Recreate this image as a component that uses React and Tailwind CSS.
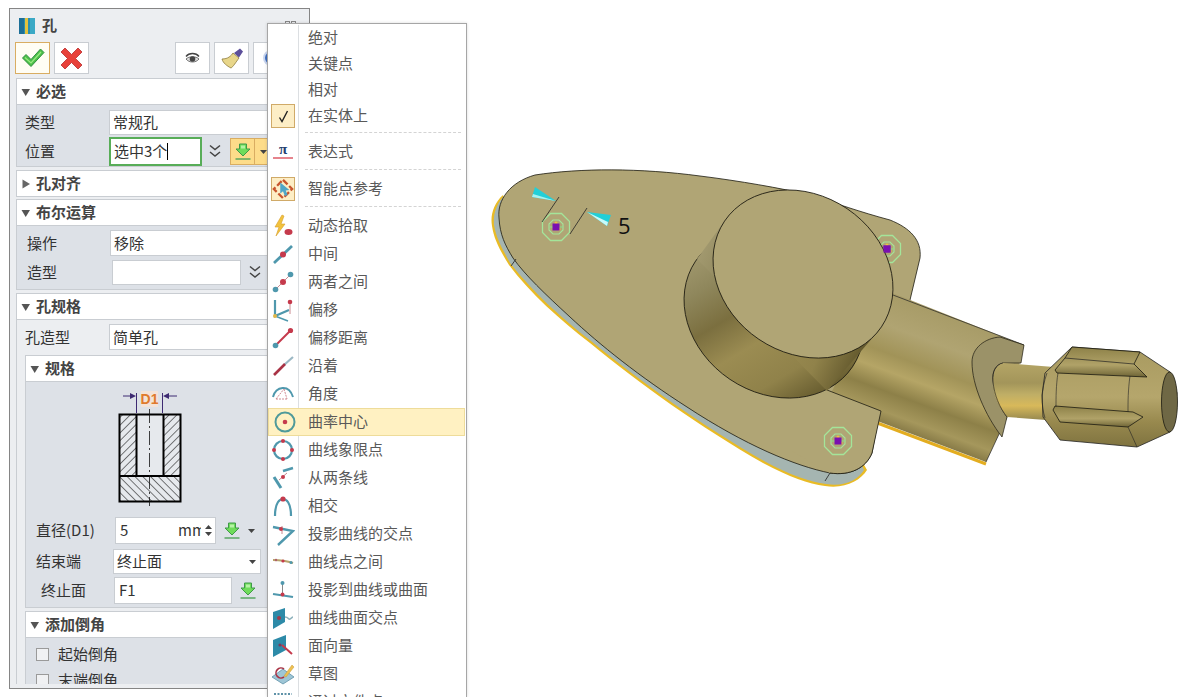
import React from "react";

const TEAL = "#4f98ad";
const RED = "#c53a4c";

const Tri = ({ open = true }) => (
  <svg width="10" height="10" viewBox="0 0 10 10" className="shrink-0">
    {open ? <path d="M0.5 2h8.5L4.7 9z" fill="#555" /> : <path d="M1.5 0.5v9L9 5z" fill="#666" />}
  </svg>
);

const Caret = () => (
  <svg width="7" height="4" viewBox="0 0 7 4" className="shrink-0">
    <path d="M0 0h7L3.5 4z" fill="#444" />
  </svg>
);

const Chevrons = () => (
  <svg width="14" height="16" viewBox="0 0 14 16" className="shrink-0">
    <path d="M2 1.5 7 5.5 12 1.5M2 8 7 12 12 8" fill="none" stroke="#444" strokeWidth="1.5" />
  </svg>
);

const GreenDown = () => (
  <svg width="18" height="18" viewBox="0 0 18 18" className="shrink-0">
    <path d="M5.5 1h7v5h3.5L9 13 2 6h3.5z" fill="#6fdc5a" stroke="#3f9a48" strokeWidth="1" />
    <path d="M7 2.5h4v3H7z" fill="#b7f2a5" />
    <path d="M1.5 16h15" stroke="#4fa35a" strokeWidth="1.4" />
  </svg>
);

const Header = ({ title, open = true }) => (
  <div className="h-[27px] bg-white border border-[#c9cdd2] flex items-center gap-[5px] pl-[4px] font-bold text-[15px] text-[#444]">
    <Tri open={open} />
    <span className="pb-px">{title}</span>
  </div>
);

const Select = ({ value, className }) => (
  <div className={`bg-white border border-[#c9cdd2] flex items-center justify-between pl-[3px] pr-[4px] text-[15px] text-[#333] ${className}`}>
    <span>{value}</span>
    <Caret />
  </div>
);

const ToolBtn = ({ active, children }) => (
  <div className={`w-[35px] h-[32px] border flex items-center justify-center shrink-0 ${active ? "border-[#d9ad62] bg-[#fffdf4]" : "bg-white border-[#c9cdd2]"}`}>
    {children}
  </div>
);

const Diagram = () => (
  <svg className="block w-[241px] h-[131px]" viewBox="26 382 241 131">
    <defs>
      <pattern id="h1" width="5.500" height="5.500" patternUnits="userSpaceOnUse" patternTransform="rotate(45)">
        <path d="M0 0V5.500" stroke="#000" strokeWidth="1" />
      </pattern>
      <pattern id="h2" width="5.500" height="5.500" patternUnits="userSpaceOnUse" patternTransform="rotate(-45)">
        <path d="M0 0V5.500" stroke="#000" strokeWidth="1" />
      </pattern>
    </defs>
    <rect x="119.5" y="414.5" width="61" height="87" fill="#e6e9ed" />
    <rect x="119.5" y="414.5" width="17" height="62" fill="url(#h1)" />
    <rect x="163.5" y="414.5" width="17" height="62" fill="url(#h1)" />
    <rect x="119.5" y="476" width="61" height="26" fill="url(#h2)" />
    <path d="M119.5 414.5h61v87h-61zM136.5 414.5v62M163.5 414.5v62M119.5 476h61" fill="none" stroke="#000" strokeWidth="2" />
    <path d="M149.5 409v97" stroke="#111" strokeWidth="0.8" strokeDasharray="14 3 2 3" />
    <path d="M136.5 393v20M162.5 393v20" stroke="#3d2a72" strokeWidth="1" />
    <path d="M123 396h8M168 396h9" stroke="#3d2a72" strokeWidth="1" />
    <path d="M130 393l6 3-6 3zM169 393l-6 3 6 3z" fill="#3d2a72" />
    <rect x="141" y="391" width="17" height="16" fill="#f3e3d8" />
    <text x="149.5" y="404" textAnchor="middle" fontSize="14" fontWeight="700" fill="#e07a2c" fontFamily="'Liberation Sans', sans-serif">D1</text>
  </svg>
);

const Panel = () => (
  <div className="mt-[8px] ml-[9px] w-[301px] h-[681px] shrink-0 border border-[#858585] bg-[#eceef1]">
    <div className="h-[675px] flex flex-col overflow-hidden">
      <div className="h-[33px] shrink-0 flex items-center gap-[7px] pl-[9px] text-[15px] font-bold text-[#444]">
        <svg width="16" height="16" viewBox="0 0 16 16">
          <rect width="16" height="16" rx="2" fill="#2b8fb0" />
          <rect x="0" width="5" height="16" fill="#1c6f98" />
          <rect x="6" width="3" height="16" fill="#e3c13d" />
          <rect x="11" width="5" height="16" fill="#3ba9c6" />
        </svg>
        <span>孔</span>
        <span className="ml-auto mr-[13px] flex gap-[1px]">
          <span className="w-[5px] h-[10px] border border-[#888]" />
          <span className="w-[5px] h-[10px] border border-[#888]" />
        </span>
      </div>
      <div className="h-[32px] shrink-0 flex gap-[4px] pl-[5px]">
        <ToolBtn active>
          <svg width="24" height="20" viewBox="0 0 24 20">
            <path d="M1.500 10 5 6.500l5 5L19.500 1 23 4.500 10 18.500z" fill="#4cc04a" stroke="#2f8f3d" strokeWidth="1" />
            <path d="M4 9.500l6 5.500L20 4" fill="none" stroke="#9bea83" strokeWidth="1.200" />
          </svg>
        </ToolBtn>
        <ToolBtn>
          <svg width="23" height="23" viewBox="0 0 23 23">
            <path d="M1 5 5 1l6.500 6.500L18 1l4 4-6.500 6.500L22 18l-4 4-6.500-6.500L5 22l-4-4 6.500-6.500z" fill="#e8413a" stroke="#b72c2c" strokeWidth="0.800" />
          </svg>
        </ToolBtn>
        <div className="w-[78px]" />
        <ToolBtn>
          <svg width="15" height="12" viewBox="0 0 15 12">
            <path d="M1 4.500C4 0.500 11 0.500 14 4.500" fill="none" stroke="#444" strokeWidth="1.300" />
            <path d="M1 7c3-3 10-3 13 0-3 4-10 4-13 0z" fill="#ddd" stroke="#555" strokeWidth="0.800" />
            <circle cx="7.500" cy="7" r="2.800" fill="#444" />
          </svg>
        </ToolBtn>
        <ToolBtn>
          <svg width="24" height="22" viewBox="0 0 24 22">
            <path d="M2 12 C8 12 11 9 13 6 L19 11 C16 15 13 20 11 21 C7 19 3 16 2 12Z" fill="#e8d68a" stroke="#8d7a3a" strokeWidth="0.800" />
            <path d="M14 6 20 1.500 23 4.500 19 10.500z" fill="#5c4f9a" />
          </svg>
        </ToolBtn>
        <ToolBtn>
          <div className="w-[16px] h-[16px] rounded-full bg-[#3f6fc0] border-2 border-[#c9d6ef]" />
        </ToolBtn>
      </div>

      <div className="flex flex-col shrink-0 w-[288px] ml-[6px] mt-[4px]">
        <Header title="必选" />
        <div className="h-[62px] bg-[#dde1e7] border border-t-0 border-[#c9cdd2] text-[15px] text-[#333] flex flex-col pt-[5px] pl-[8px] gap-[2px]">
          <div className="flex items-center h-[25px]">
            <span className="w-[84px]">类型</span>
            <Select value="常规孔" className="h-[25px] w-[170px]" />
          </div>
          <div className="flex items-center h-[29px]">
            <span className="w-[84px]">位置</span>
            <div className="w-[93px] h-[29px] bg-white border-2 border-[#58ad58] flex items-center pl-[3px]">
              <span>选中3个</span>
              <span className="w-px h-[17px] bg-black" />
            </div>
            <div className="ml-[6px]"><Chevrons /></div>
            <div className="ml-[8px] w-[40px] h-[27px] bg-[#fddc8a] border border-[#d9ad62] flex items-center">
              <div className="w-[24px] flex justify-center border-r border-[#d9ad62] h-full items-center"><GreenDown /></div>
              <div className="ml-[5px]"><Caret /></div>
            </div>
          </div>
        </div>

        <div className="mt-[3px]"><Header title="孔对齐" open={false} /></div>

        <div className="mt-[2px]"><Header title="布尔运算" /></div>
        <div className="h-[64px] bg-[#dde1e7] border border-t-0 border-[#c9cdd2] text-[15px] text-[#333] flex flex-col pt-[4px] pl-[10px] gap-[4px]">
          <div className="flex items-center h-[26px]">
            <span className="w-[83px]">操作</span>
            <Select value="移除" className="h-[26px] w-[170px]" />
          </div>
          <div className="flex items-center h-[25px]">
            <span className="w-[85px]">造型</span>
            <div className="w-[129px] h-[25px] bg-white border border-[#c9cdd2]" />
            <div className="ml-[7px]"><Chevrons /></div>
          </div>
        </div>

        <div className="mt-[3px]"><Header title="孔规格" /></div>
        <div className="h-[365px] bg-[#eceef1] border-l border-[#c9cdd2] text-[15px] text-[#333] flex flex-col">
          <div className="flex items-center h-[26px] mt-[4px] pl-[8px]">
            <span className="w-[84px]">孔造型</span>
            <Select value="简单孔" className="h-[26px] w-[170px]" />
          </div>
          <div className="ml-[8px] mt-[5px] w-[270px] flex flex-col">
            <Header title="规格" />
            <div className="h-[226px] bg-[#dde1e7] border-l border-b border-[#c9cdd2] flex flex-col">
              <Diagram />
              <div className="flex items-center h-[27px] mt-[4px] pl-[10px]">
                <span className="w-[79px] whitespace-nowrap">直径(D1)</span>
                <div className="w-[101px] h-[27px] bg-white border border-[#c9cdd2] flex items-center pl-[4px] pr-[3px] justify-between">
                  <span>5</span>
                  <span className="flex items-center gap-[4px]">
                    <span className="w-[23px] overflow-hidden whitespace-nowrap">mm</span>
                    <span className="flex flex-col gap-[3px]">
                      <svg width="7" height="4" viewBox="0 0 7 4"><path d="M0 4h7L3.500 0z" fill="#444" /></svg>
                      <Caret />
                    </span>
                  </span>
                </div>
                <div className="ml-[7px]"><GreenDown /></div>
                <div className="ml-[7px]"><Caret /></div>
              </div>
              <div className="flex items-center h-[25px] mt-[5px] pl-[10px]">
                <span className="w-[77px]">结束端</span>
                <Select value="终止面" className="h-[25px] w-[148px]" />
              </div>
              <div className="flex items-center h-[27px] mt-[3px] pl-[15px]">
                <span className="w-[73px]">终止面</span>
                <div className="w-[118px] h-[27px] bg-white border border-[#c9cdd2] flex items-center pl-[4px]">F1</div>
                <div className="ml-[7px]"><GreenDown /></div>
              </div>
            </div>
            <div className="mt-[3px]"><Header title="添加倒角" /></div>
            <div className="h-[60px] bg-[#dde1e7] border-l border-[#c9cdd2] flex flex-col pl-[10px] pt-[9px] gap-[12px]">
              <div className="flex items-center gap-[9px] h-[14px]">
                <span className="w-[13px] h-[13px] bg-[#f0f1f3] border border-[#9a9a9a]" />
                <span>起始倒角</span>
              </div>
              <div className="flex items-center gap-[9px] h-[14px]">
                <span className="w-[13px] h-[13px] bg-[#f0f1f3] border border-[#9a9a9a]" />
                <span>末端倒角</span>
              </div>
            </div>
          </div>
        </div>
      </div>
    </div>
  </div>
);

// menu icons, 24x24
const I = ({ children }) => (
  <svg width="24" height="24" viewBox="0 0 24 24">{children}</svg>
);
const Dot = ({ x, y, c = RED, r = 2.4 }) => <circle cx={x} cy={y} r={r} fill={c} />;
const Ln = ({ d, c = TEAL, w = 2.2 }) => <path d={d} fill="none" stroke={c} strokeWidth={w} />;

const icons = {
  expr: (
    <I>
      <text x="12" y="14" textAnchor="middle" fontSize="15" fontWeight="700" fill="#24406f" fontFamily="'Liberation Serif', serif">π</text>
      <path d="M2 18h20" stroke="#d9424f" strokeWidth="1.300" />
    </I>
  ),
  smart: (
    <I>
      <path d="M12 2 22 12 12 22 2 12z" fill="none" stroke="#c8562e" strokeWidth="2.500" strokeDasharray="7 2.500" />
      <path d="M9 5l10 8-4 .5 2 5-3 1-2-5-3 2.500z" fill="#4fa6c8" />
    </I>
  ),
  dyn: (
    <I>
      <path d="M11 1 4 13h4l-3 9 9-12h-4l3-8z" fill="#f2c23e" stroke="#d79d2a" strokeWidth="0.600" />
      <ellipse cx="17.500" cy="18" rx="4" ry="3" fill={RED} />
    </I>
  ),
  mid: (<I><Ln d="M3 21 21 4" w={2.800} /><Dot x={12} y={12.500} r={3} /></I>),
  between: (<I><Ln d="M5 19 19 5" c="#c98a90" w={1} /><Dot x={12} y={12} r={3} /><Dot x={4.500} y={19.500} c={TEAL} r={2.800} /><Dot x={19.500} y={4.500} c={TEAL} r={2.800} /></I>),
  offset: (<I><Ln d="M4 2v16l14-6" /><Ln d="M4 18l13 5" w={1.500} /><Ln d="M19 6v10" c="#c98a90" w={1} /><Dot x={19} y={4} r={2.300} /><Dot x={4} y={18} c="#e2b648" r={2} /></I>),
  dist: (<I><Ln d="M5 19 19 5" c={RED} w={2} /><Dot x={19.500} y={4.500} r={2.600} /><Dot x={4.500} y={19.500} c={TEAL} r={2.800} /></I>),
  along: (<I><Ln d="M13 11 22 3" c="#9bb8c4" w={2.200} /><Ln d="M3 21 14 10" c="#a93345" w={2.600} /></I>),
  angle: (<I><path d="M2 15C5 4 18 2 22 15" fill="none" stroke={TEAL} strokeWidth="2" /><path d="M5 17 13 7M5 17h11M13 7l3 10" fill="none" stroke="#d08a92" strokeWidth="1" strokeDasharray="2 1" /></I>),
  center: (<I><circle cx="12" cy="12" r="9.500" fill="none" stroke="#4f9a9a" strokeWidth="2" /><Dot x={12} y={12} r={2.300} /></I>),
  quad: (<I><circle cx="12" cy="12" r="9" fill="none" stroke={TEAL} strokeWidth="2.200" /><Dot x={12} y={3} r={2} /><Dot x={12} y={21} r={2} /><Dot x={3} y={12} r={2} /><Dot x={21} y={12} r={2} /></I>),
  two: (<I><Ln d="M3 11l7 11" w={3} /><Ln d="M12 5l10-3" w={2.500} /><Ln d="M8 14l8-7" c="#c98a90" w={1} /><Dot x={12} y={11} r={2} /></I>),
  cross: (<I><Ln d="M4 22C4 8 9 5 12 5s8 3 8 17" w={2.200} /><Dot x={12} y={5} r={2.600} /></I>),
  proj: (<I><Ln d="M2 5l20 4L7 23" w={2.400} /><Ln d="M11 4v8" c="#c98a90" w={1} /><Dot x={10} y={7} r={2} /></I>),
  curve: (<I><path d="M2 10c6 0 14 1 20 3" fill="none" stroke="#b7a36a" strokeWidth="2.200" /><Dot x={5} y={10} c="#b0606a" r={1.200} /><Dot x={12} y={11} r={1.600} /><Dot x={20} y={12.500} c={TEAL} r={1.500} /></I>),
  toCurve: (<I><Ln d="M2 16l20 3" w={2.200} /><Ln d="M11.500 6v10" c="#888" w={1} /><Dot x={11.500} y={5} c={TEAL} r={2} /><Dot x={11.500} y={16.500} r={2} /></I>),
  face: (<I><path d="M2 6 14 2v14L2 23z" fill="#2d8aa8" /><path d="M14 11c4 0 3 3 5 2s2-2 3-2" fill="none" stroke="#8fb3bd" strokeWidth="1.500" /><Dot x={8} y={12} c="#a33a4a" r={2} /></I>),
  normal: (<I><path d="M2 6 15 1v15L2 23z" fill="#2d8aa8" /><Ln d="M11 11 21 20" c={RED} w={2} /><Dot x={9} y={11} c="#7b3a5a" r={1.600} /></I>),
  sketch: (<I><path d="M1 15 12 7l11 8-11 7z" fill="#9ec6d6" stroke="#5f92a8" strokeWidth="0.800" /><path d="M13 7a5 5 0 1 0 0 8" fill="none" stroke="#a93345" strokeWidth="1.600" /><path d="M13 14 21 3l2 2-8 10z" fill="#eec052" stroke="#c69a34" strokeWidth="0.500" /></I>),
  dots: (<I><path d="M3 4h18" stroke="#5f92a8" strokeWidth="2" strokeDasharray="2 1.500" /></I>),
};

const rows = [
  { t: "绝对", h: 26 },
  { t: "关键点", h: 26 },
  { t: "相对", h: 26 },
  { t: "在实体上", h: 26, box: true, check: true },
  { sep: true },
  { t: "表达式", icon: "expr" },
  { sep: true },
  { t: "智能点参考", icon: "smart", box: true },
  { sep: true },
  { t: "动态拾取", icon: "dyn" },
  { t: "中间", icon: "mid" },
  { t: "两者之间", icon: "between" },
  { t: "偏移", icon: "offset" },
  { t: "偏移距离", icon: "dist" },
  { t: "沿着", icon: "along" },
  { t: "角度", icon: "angle" },
  { t: "曲率中心", icon: "center", hover: true },
  { t: "曲线象限点", icon: "quad" },
  { t: "从两条线", icon: "two" },
  { t: "相交", icon: "cross" },
  { t: "投影曲线的交点", icon: "proj" },
  { t: "曲线点之间", icon: "curve" },
  { t: "投影到曲线或曲面", icon: "toCurve" },
  { t: "曲线曲面交点", icon: "face" },
  { t: "面向量", icon: "normal" },
  { t: "草图", icon: "sketch" },
  { t: "通过文件点", icon: "dots" },
];

const Menu = () => (
  <div className="absolute left-[267px] top-[23px] w-[200px] h-[674px] overflow-hidden bg-white border border-b-0 border-[#a6a6a6] shadow-[0_0_3px_rgba(0,0,0,0.15)] pt-px text-[15px] text-[#595959]">
    {rows.map((r, i) =>
      r.sep ? (
        <div key={i} className="flex h-[9px]">
          <div className="w-[31px] border-r border-[#dcdfe2]" />
          <div className="flex-1 pl-[6px] pr-[5px] pt-[3px]">
            <div className="border-t border-dashed border-[#d4d4d4]" />
          </div>
        </div>
      ) : (
        <div
          key={i}
          className={`flex items-center mr-px ${r.h === 26 ? "h-[26px]" : "h-[28px]"} ${r.hover ? "bg-[#fff1c2] border border-[#eedc9a]" : ""}`}
        >
          <div className={`w-[31px] h-full shrink-0 flex items-center justify-center ${r.hover ? "" : "border-r border-[#dcdfe2]"}`}>
            {r.box ? (
              <div className="w-[24px] h-[24px] bg-[#fdeec6] border border-[#d0aa68] flex items-center justify-center">
                {r.check ? (
                  <svg width="11" height="13" viewBox="0 0 11 13"><path d="M1.500 7.500 4 11.500 9.500 1" fill="none" stroke="#222" strokeWidth="1.400" /></svg>
                ) : (
                  icons[r.icon]
                )}
              </div>
            ) : (
              r.icon && icons[r.icon]
            )}
          </div>
          <span className={`${r.hover ? "pl-[8px]" : "pl-[9px]"} pb-px whitespace-nowrap`}>{r.t}</span>
        </div>
      )
    )}
  </div>
);

const Hole = ({ x, y }) => (
  <g transform={`translate(${x} ${y})`}>
    <path d="M-5.500-13.500h11l8 8v11l-8 8h-11l-8-8v-11z" fill="none" stroke="#a4e59a" strokeWidth="1.300" />
    <path d="M-3-7h6l4 4v6l-4 4h-6l-4-4v-6z" fill="none" stroke="#a4e59a" strokeWidth="1.100" />
    <path d="M-7 0H7" stroke="#8fdc8a" strokeWidth="1" />
    <circle cx="3" cy="2" r="1.500" fill="#f0c040" />
    <circle cx="0" cy="-4" r="1.500" fill="#f0c040" />
    <rect x="-3.500" y="-3.500" width="7" height="7" fill="#7a10b0" />
  </g>
);

const Model = () => (
  <svg className="block flex-1 h-[697px]" viewBox="310 0 874 697">
    <defs>
      <linearGradient id="cyl" gradientUnits="userSpaceOnUse" x1="680" y1="280" x2="870" y2="370">
        <stop offset="0" stopColor="#a59c72" />
        <stop offset="0.2" stopColor="#8f875c" />
        <stop offset="0.38" stopColor="#7b6f3f" />
        <stop offset="0.55" stopColor="#9b8c52" />
        <stop offset="0.75" stopColor="#90824a" />
        <stop offset="0.9" stopColor="#6b6032" />
        <stop offset="1" stopColor="#4f4826" />
      </linearGradient>
      <linearGradient id="shaft" gradientUnits="userSpaceOnUse" x1="950" y1="318" x2="905" y2="440">
        <stop offset="0" stopColor="#a89c68" />
        <stop offset="0.22" stopColor="#b0a472" />
        <stop offset="0.42" stopColor="#a19358" />
        <stop offset="0.55" stopColor="#b5a566" />
        <stop offset="0.7" stopColor="#8d8048" />
        <stop offset="0.85" stopColor="#a5975c" />
        <stop offset="1" stopColor="#75693a" />
      </linearGradient>
      <linearGradient id="rod" x1="0" y1="0" x2="0" y2="1">
        <stop offset="0" stopColor="#b4a566" />
        <stop offset="0.35" stopColor="#a3955a" />
        <stop offset="0.55" stopColor="#bfae66" />
        <stop offset="0.75" stopColor="#d8b95a" />
        <stop offset="1" stopColor="#968950" />
      </linearGradient>
      <linearGradient id="knob" x1="0" y1="0" x2="0" y2="1">
        <stop offset="0" stopColor="#a89a60" />
        <stop offset="0.5" stopColor="#b5a66c" />
        <stop offset="0.75" stopColor="#98894e" />
        <stop offset="1" stopColor="#7f7340" />
      </linearGradient>
      <linearGradient id="ridge" x1="0" y1="0" x2="0" y2="1">
        <stop offset="0" stopColor="#8d8148" />
        <stop offset="0.6" stopColor="#b0a268" />
        <stop offset="1" stopColor="#6e6436" />
      </linearGradient>
    </defs>

    <path d="M503 195C494 203 490 215 492 226C494 240 501 252 509 265C530 293 560 320 590 343C640 384 700 427 763 463C790 477 808 484 825 486C845 489 860 481 867 470L850 440L510 215Z" fill="#e9bb25" />
    <path d="M503 197C496 205 493 215 494 225C496 238 503 250 510 263C532 291 561 318 591 341C641 382 701 425 764 461C790 475 810 482 826 484C845 487 858 480 864 470L850 440L510 215Z" fill="#a5b5b1" />

    <path d="M499 218C497 200 510 182 535 175C580 168 640 168 700 176C740 181 780 188 810 195C835 203 860 212 890 220C910 228 922 240 920 258L910 300L880 410L872 453C866 468 850 476 830 473C795 466 745 445 687 407C640 377 600 345 570 317C545 294 525 275 513 258C505 245 500 235 499 218Z" fill="#b0a575" stroke="#1c1a10" strokeWidth="0.800" />
    <path d="M516 259 511 266M830 473 825 481" stroke="#222" strokeWidth="0.800" />

    <Hole x={887} y={249} />

    <path d="M827 404 986 464" stroke="#e3ad20" strokeWidth="3" />
    <path d="M880 288 1024 345 1007 417 986 462 827 402z" fill="url(#shaft)" />
    <path d="M893 295 1024 345M1007 417 986 462" stroke="#222" strokeWidth="0.700" />
    <path d="M1000 337 1024 345 1021 363 1003 363C995 365 992 372 993 381C994 395 1000 408 1007 417L1002 437C985 415 972 385 972 362C972 348 985 338 1000 337Z" fill="#9b9268" stroke="#1c1a10" strokeWidth="0.700" />

    <path d="M1003 363 1054 367 1046 420 1007 417C998 405 990 390 994 375C995 368 999 364 1003 363Z" fill="url(#rod)" />
    <path d="M1003 363C996 364 992 372 993 381C994 395 1000 408 1007 417" fill="none" stroke="#222" strokeWidth="0.600" />

    <path d="M1045 373 1072 347 1140 352 1170 372 1177 393 1170 432 1137 447 1060 440 1043 417 1042 395z" fill="url(#knob)" stroke="#222" strokeWidth="0.800" />
    <path d="M1055 370 1065 358 1072 347 1140 352 1134 364 1147 377 1057 373z" fill="url(#ridge)" stroke="#1c1a10" strokeWidth="0.800" />
    <path d="M1065 358 1134 364" stroke="#222" strokeWidth="0.700" />
    <path d="M1053 410 1060 422 1128 427 1143 417 1133 412 1055 406z" fill="url(#ridge)" stroke="#1c1a10" strokeWidth="0.800" />
    <path d="M1058 373C1056 385 1056 398 1056 407M1130 376C1128 390 1128 402 1128 412M1128 427 1137 447" fill="none" stroke="#222" strokeWidth="0.600" />
    <path d="M1047 373C1041 390 1041 405 1045 418" fill="none" stroke="#222" strokeWidth="0.600" />
    <ellipse cx="1169.500" cy="402" rx="8" ry="30" fill="#6f6845" stroke="#1c1a10" strokeWidth="0.800" />

    <path d="M790 380 827 390 881 411 872 453C866 468 850 476 830 473L790 450Z" fill="#b0a575" />
    <path d="M827 390 881 411 872 453C866 468 850 476 830 473" fill="none" stroke="#1c1a10" strokeWidth="0.800" />

    <ellipse cx="774" cy="314" rx="94.600" ry="78.800" transform="rotate(34 774 314)" fill="url(#cyl)" stroke="#1c1a10" strokeWidth="0.800" />
    <path d="M726 219 880 329 827 391 697 259z" fill="url(#cyl)" />
    <ellipse cx="803" cy="274" rx="94.600" ry="78.800" transform="rotate(34 803 274)" fill="#b0a575" stroke="#1c1a10" strokeWidth="0.800" />

    <Hole x={556} y={227} />
    <Hole x={838} y={441} />
    <rect x="883.500" y="245.500" width="7" height="7" fill="#7a10b0" />

    <path d="M559 197 542 222M587 208 570 234" stroke="#222" strokeWidth="0.800" />
    <path d="M556 201 535 187 532 197z" fill="#22cfd8" />
    <path d="M556 201 533 194 532 197z" fill="#a8f2f2" />
    <path d="M587 212 611 215 607 226z" fill="#22cfd8" />
    <path d="M587 212 608 222 607 226z" fill="#c8fafa" />
    <text x="618" y="234" fontSize="22" fill="#111" fontFamily="'Open Sans', sans-serif">5</text>
  </svg>
);

export default function App() {
  return (
    <div className="relative w-[1184px] h-[697px] overflow-hidden bg-white flex items-start font-['Noto_Sans_CJK_SC','Noto_Sans',sans-serif]">
      <Panel />
      <Model />
      <Menu />
    </div>
  );
}
